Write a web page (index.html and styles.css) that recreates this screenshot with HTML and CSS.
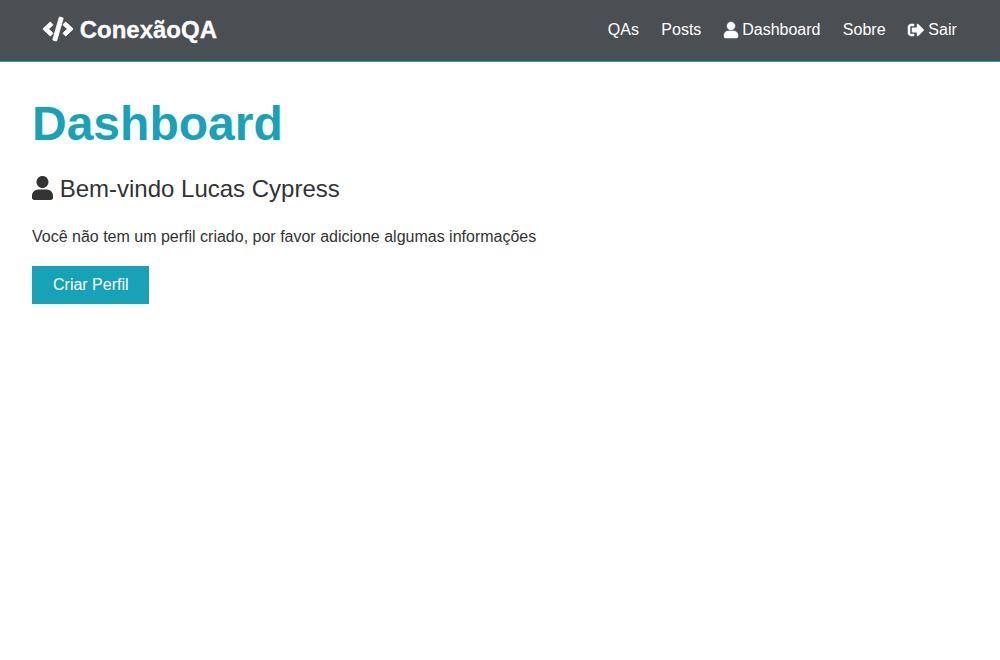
FILE: index.html
```html
<!DOCTYPE html>
<html lang="pt-BR">
<head>
<meta charset="utf-8">
<title>ConexãoQA</title>
<link rel="stylesheet" href="styles.css">
</head>
<body>
<nav class="navbar">
  <h1 class="brand"><a href="#"><svg class="icon icon-code" viewBox="0 0 640 512"><path d="M278.900 511.500l-61-17.700c-6.400-1.800-10-8.500-8.200-14.900L346.200 8.700c1.800-6.400 8.500-10 14.900-8.200l61 17.700c6.400 1.800 10 8.500 8.200 14.900L293.800 503.300c-1.900 6.400-8.500 10.100-14.900 8.200zm-114-112.200l43.500-46.400c4.600-4.900 4.300-12.700-.8-17.200L117 256l90.600-79.700c5.100-4.500 5.500-12.300.8-17.200l-43.500-46.400c-4.500-4.800-12.100-5.100-17-.5L3.800 247.200c-5.100 4.700-5.100 12.800 0 17.500l144.100 135.100c4.900 4.600 12.500 4.400 17-.5zm327.200.6l144.100-135.100c5.100-4.700 5.100-12.800 0-17.500L492.100 112.100c-4.800-4.500-12.400-4.300-17 .5L431.600 159c-4.600 4.900-4.300 12.700.8 17.200L523 256l-90.600 79.700c-5.100 4.500-5.500 12.300-.8 17.200l43.500 46.400c4.500 4.900 12.100 5.100 17 .6z"/></svg> ConexãoQA</a></h1>
  <ul class="menu">
    <li><a href="#">QAs</a></li>
    <li><a href="#">Posts</a></li>
    <li><a href="#"><svg class="icon icon-user" viewBox="0 0 448 512"><path d="M224 256c70.700 0 128-57.300 128-128S294.700 0 224 0 96 57.300 96 128s57.300 128 128 128zM134.400 288h179.200C387.800 288 448 348.200 448 422.400V464c0 26.500-21.500 48-48 48H48c-26.500 0-48-21.500-48-48v-41.600C0 348.200 60.200 288 134.400 288z"/></svg> Dashboard</a></li>
    <li><a href="#">Sobre</a></li>
    <li><a href="#"><svg class="icon icon-out" viewBox="0 0 512 512"><path d="M497 273L329 441c-15 15-41 4.500-41-17v-96H152c-13.300 0-24-10.700-24-24v-96c0-13.300 10.700-24 24-24h136V88c0-21.400 25.900-32 41-17l168 168c9.300 9.400 9.300 24.600 0 34zM192 436v-40c0-6.600-5.400-12-12-12H96c-17.700 0-32-14.300-32-32V160c0-17.700 14.300-32 32-32h84c6.600 0 12-5.400 12-12V76c0-6.600-5.400-12-12-12H96c-53 0-96 43-96 96v192c0 53 43 96 96 96h84c6.600 0 12-5.400 12-12z"/></svg> Sair</a></li>
  </ul>
</nav>
<section class="container">
  <h1 class="title">Dashboard</h1>
  <p class="lead"><svg class="icon icon-user" viewBox="0 0 448 512"><path d="M224 256c70.700 0 128-57.300 128-128S294.700 0 224 0 96 57.300 96 128s57.300 128 128 128zM134.400 288h179.200C387.800 288 448 348.200 448 422.400V464c0 26.500-21.500 48-48 48H48c-26.500 0-48-21.500-48-48v-41.600C0 348.200 60.200 288 134.400 288z"/></svg> Bem-vindo Lucas Cypress</p>
  <p class="message">Você não tem um perfil criado, por favor adicione algumas informações</p>
  <a href="#" class="btn">Criar Perfil</a>
</section>
</body>
</html>
```
FILE: styles.css
```css
* { box-sizing: border-box; margin: 0; padding: 0; }
body { font: 16px/1.6 "Liberation Sans", Arial, sans-serif; background: #fff; color: #333; }
a { color: inherit; text-decoration: none; }
ul { list-style: none; }
.icon { display: inline-block; height: 1em; fill: currentColor; vertical-align: -0.125em; overflow: visible; }
.icon-code { width: 1.25em; stroke: currentColor; stroke-width: 18; }
.icon-user { width: 0.875em; }
.icon-out { width: 1em; }
.navbar { display: flex; justify-content: space-between; align-items: center; height: 62px; padding: 0 32px 1px; background: #4a4f53; border-bottom: 1px solid #17a2b8; color: #fff; }
.navbar .menu .icon { stroke: currentColor; stroke-width: 16; vertical-align: -0.165em; }
.brand { font-size: 24px; line-height: 1.6; padding-left: 11px; -webkit-text-stroke: 0.3px; }
.menu { display: flex; }
.menu a { padding: 0.45rem; margin: 0 0.25rem; }
.container { padding: 33px 32px 32px; }
.title { font-size: 48px; line-height: 1.2; color: #17a2b8; margin-bottom: 17px; }
.lead { font-size: 24px; margin-bottom: 16px; }
.message { margin-bottom: 16px; }
.btn { display: inline-block; background: #17a2b8; color: #fff; padding: 6px 20px 7px 21px; }
```
